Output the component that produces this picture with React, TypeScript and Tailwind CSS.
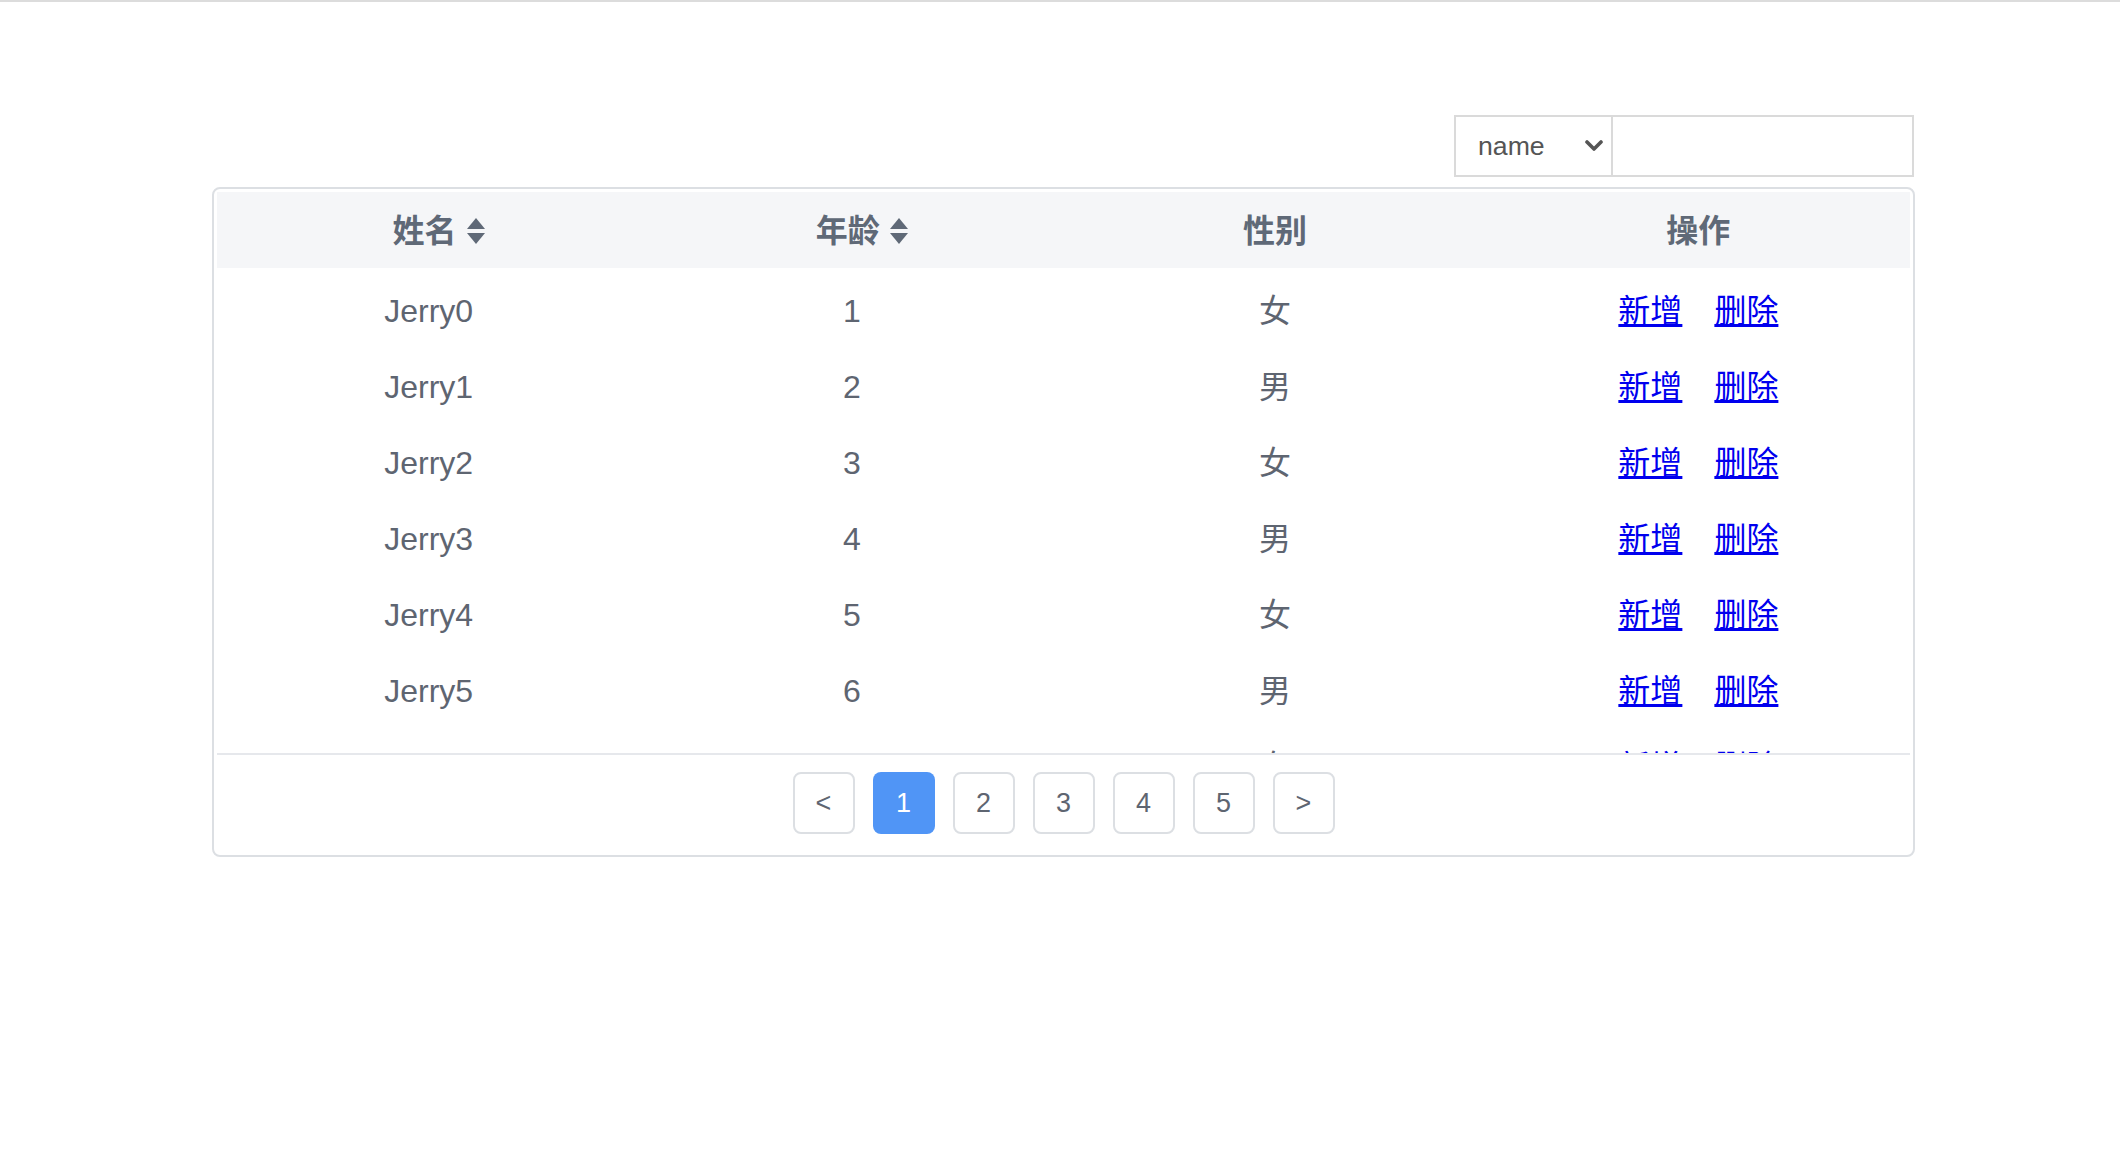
import React from "react";

const rows = Array.from({ length: 10 }, (_, i) => ({
  name: `Jerry${i}`,
  age: i + 1,
  sex: i % 2 === 0 ? "女" : "男",
}));

const pages = ["<", "1", "2", "3", "4", "5", ">"];

const SortIcon = () => (
  <svg
    width="20"
    height="28"
    viewBox="0 0 20 28"
    className="absolute left-full top-1/2 ml-[9px] -translate-y-1/2"
  >
    <polygon points="10,1 19,12 1,12" fill="#5f6977" />
    <polygon points="1,16 19,16 10,27" fill="#5f6977" />
  </svg>
);

const HeadCell = ({ title, sortable }: { title: string; sortable?: boolean }) => (
  <div className={sortable ? "flex items-center justify-center pr-[8px] pt-[2px]" : "flex items-center justify-center pt-[2px]"}>
    <span className="relative">
      {title}
      {sortable && <SortIcon />}
    </span>
  </div>
);

export default function App() {
  return (
    <div
      className="min-h-[1164px] w-[2120px] border-t-2 border-[#dcdcdc] bg-white"
      style={{ fontFamily: '"Liberation Sans", "Noto Sans CJK SC", sans-serif' }}
    >
      <div className="ml-[212px] w-[1703px] pt-[113px]">
        {/* search bar */}
        <div className="flex justify-end pr-[1px]">
          <div className="flex h-[62px] w-[159px] items-center justify-between border-2 border-[#dadada] pl-[22px] pr-[8px] text-[26.67px] text-[#555]">
            <span>name</span>
            <svg width="18" height="12" viewBox="0 0 18 12">
              <polyline
                points="2,2 9,9 16,2"
                fill="none"
                stroke="#555"
                strokeWidth="3.6"
                strokeLinecap="round"
                strokeLinejoin="round"
              />
            </svg>
          </div>
          <input
            className="h-[62px] w-[301px] border-2 border-l-0 border-[#dadada] px-3 text-[26px] outline-none"
            type="text"
          />
        </div>

        {/* table */}
        <div className="mt-[10px] rounded-[8px] border-2 border-[#dcdfe3] px-[3px] pt-[3px]">
          <div className="grid h-[76px] grid-cols-4 bg-[#f5f6f8] text-[32px] font-bold text-[#5f6977]">
            <HeadCell title="姓名" sortable />
            <HeadCell title="年龄" sortable />
            <HeadCell title="性别" />
            <HeadCell title="操作" />
          </div>

          <div className="h-[485px] overflow-hidden pt-[5px]">
            {rows.map((r) => (
              <div
                key={r.name}
                className="grid h-[76px] grid-cols-4 items-center text-center text-[32px] text-[#5e6571]"
              >
                <div>{r.name}</div>
                <div>{r.age}</div>
                <div>{r.sex}</div>
                <div className="flex justify-center gap-[32px]">
                  <a href="#" className="text-[#0000ee] underline">
                    新增
                  </a>
                  <a href="#" className="text-[#0000ee] underline">
                    删除
                  </a>
                </div>
              </div>
            ))}
          </div>

          <div className="h-[2px] bg-[#e6e8ec]" />

          <div className="flex justify-center gap-[18px] pb-[21px] pt-[17px]">
            {pages.map((p) => (
              <div
                key={p}
                className={
                  p === "1"
                    ? "flex h-[62px] w-[62px] items-center justify-center rounded-[8px] bg-[#5095f6] text-[27px] text-white"
                    : "flex h-[62px] w-[62px] items-center justify-center rounded-[8px] border-2 border-[#dcdfe3] bg-white text-[27px] text-[#5e6571]"
                }
              >
                {p}
              </div>
            ))}
          </div>
        </div>
      </div>
    </div>
  );
}
